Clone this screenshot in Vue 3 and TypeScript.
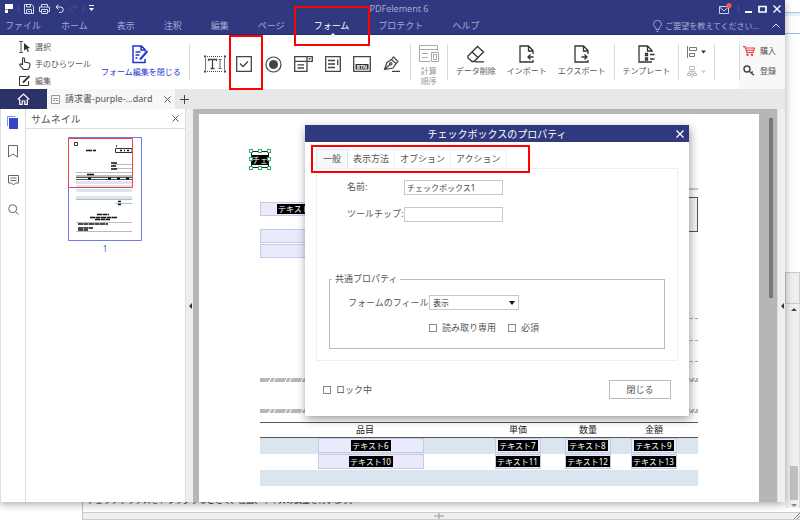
<script setup lang="ts">
import { ref } from 'vue'

interface Row {
  name: string
  price: string
  qty: string
  total: string
}

const menus: string[] = ['ファイル', 'ホーム', '表示', '注釈', '編集', 'ページ', 'フォーム', 'プロテクト', 'ヘルプ']
const activeMenu = ref('フォーム')

const tabs: string[] = ['一般', '表示方法', 'オプション', 'アクション']
const activeTab = ref('一般')

const fieldName = ref('チェックボックス1')
const tooltip = ref('')
const visibility = ref('表示')
const readOnly = ref(false)
const required = ref(false)
const locked = ref(false)

const rows: Row[] = [
  { name: 'テキスト6', price: 'テキスト7', qty: 'テキスト8', total: 'テキスト9' },
  { name: 'テキスト10', price: 'テキスト11', qty: 'テキスト12', total: 'テキスト13' },
  { name: '', price: '', qty: '', total: '' },
  { name: '', price: '', qty: '', total: '' },
  { name: '', price: '', qty: '', total: '' },
]
</script>

<template>
  <div class="desktop">
    <div class="back-edge">
      <div class="back-top"></div>
      <div class="back-block"></div>
      <div class="back-scroll">
        <svg width="8" height="5" viewBox="0 0 8 5"><path d="M1 4L4 1l3 3z" fill="#444" /></svg>
        <span class="back-thumb"></span>
        <svg width="8" height="5" viewBox="0 0 8 5"><path d="M1 1l3 3 3-3z" fill="#888" /></svg>
      </div>
    </div>
    <div class="back-window">
      <p>チェックボックスをドラッグすることで、位置、サイズの調整を行います。</p>
      <div class="back-status">
        <svg class="cross" width="10" height="6" viewBox="0 0 10 6"><path d="M0 3h10M5 0v6" stroke="#999" /></svg>
        <svg class="grip" width="6" height="6" viewBox="0 0 6 6"><path d="M0 6L6 0M3 6l3-3" stroke="#888" /></svg>
      </div>
    </div>

    <div class="window">
      <header class="head">
        <div class="titlebar">
          <div class="quick">
            <svg width="8" height="9" viewBox="0 0 8 9"><path d="M0 0h8v5H3v4H0z" fill="#fff" /><path d="M0 5.500h3" stroke="#303980" stroke-width=".6" /></svg>
            <i class="vbar"></i>
            <button aria-label="保存"><svg width="10" height="10" viewBox="0 0 10 10" fill="none" stroke="#d5d8ee"><path d="M.5.5h7l2 2v7h-9zM2.500 9.500v-4h5v4M2.500.5v2.500h4V.5M4 7.500h2" /></svg></button>
            <button aria-label="印刷"><svg width="11" height="10" viewBox="0 0 11 10" fill="none" stroke="#d5d8ee"><path d="M2.500 3V.5h6V3M2.500 7.500h-2V3h10v4.500h-2M2.500 5.500h6v4h-6zM4 7.500h3" /></svg></button>
            <button aria-label="元に戻す"><svg width="9" height="9" viewBox="0 0 9 9" fill="none" stroke="#e5e7f5"><path d="M3.500.5L1 3l2.500 2.500M1 3h4.500a2.500 2.500 0 010 5.500H4" /></svg></button>
            <button aria-label="やり直し"><svg width="9" height="9" viewBox="0 0 9 9" fill="none" stroke="#454e92"><path d="M5.500.5L8 3 5.500 5.500M8 3H3.500a2.500 2.500 0 000 5.500H5" /></svg></button>
            <i class="vbar"></i>
            <button aria-label="カスタマイズ"><svg width="5" height="7" viewBox="0 0 5 7" fill="#fff"><path d="M0 0h5v1H0zM0 3h5L2.500 6z" /></svg></button>
          </div>
          <span class="app-name">PDFelement 6</span>
          <div class="win-buttons">
            <button aria-label="メッセージ"><svg width="14" height="13" viewBox="0 0 14 13" fill="none" stroke="#cfd2ea"><path d="M1.500 4.500h9v7h-9zM1.500 5l4.500 4 4.500-4" /><circle cx="11" cy="3.500" r="2.500" fill="#fb5a3c" stroke="none" /></svg></button>
            <i class="vbar"></i>
            <button aria-label="最小化"><svg width="7" height="8" viewBox="0 0 7 8"><path d="M0 7h7" stroke="#fff" stroke-width="2" /></svg></button>
            <button aria-label="最大化"><svg width="9" height="8" viewBox="0 0 9 8"><path d="M1 1.500h7v5.500H1z" fill="none" stroke="#fff" stroke-width="1.700" /></svg></button>
            <button aria-label="終了"><svg width="8" height="8" viewBox="0 0 8 8"><path d="M.5.5l7 7M7.500.5l-7 7" stroke="#fff" stroke-width="1.400" /></svg></button>
          </div>
        </div>
        <nav class="menubar">
          <button v-for="m in menus" :key="m" class="menu" :class="{ active: m === activeMenu }" @click="activeMenu = m">{{ m }}</button>
          <div class="wish">
            <svg width="9" height="12" viewBox="0 0 9 12" fill="none" stroke="#9fa4c9"><path d="M3 9.500V8C1 6.500.5 5.500.5 4.300a4 4 0 018 0C8.500 5.500 8 6.500 6 8v1.500zM3.500 11.500h2" /></svg>
            <span>ご要望を教えてください...</span>
            <button aria-label="リボンを折りたたむ"><svg width="8" height="5" viewBox="0 0 8 5" fill="none" stroke="#dfe1f2"><path d="M.5 4.500L4 1l3.500 3.500" /></svg></button>
          </div>
        </nav>
      </header>

      <div class="ribbon">
        <div class="modes">
          <button><svg width="12" height="12" viewBox="0 0 12 12"><path d="M0 .5h4M2 .5v11M0 11.500h4" stroke="#555" fill="none" /><path d="M5 2l6 5-2.500.4L10 10.500l-1.200.6-1.500-3L5 9.500z" fill="#333" /></svg>選択</button>
          <button><svg width="12" height="13" viewBox="0 0 12 13" fill="none" stroke="#333" stroke-width="1.100"><path d="M3.500 7.500V1.800c0-1.500 2-1.500 2 0V5l4 .8c1.500.4 1.700 1 1.500 2.200l-.6 2.500-1.400 2H4.500L1 8.500C.3 7.400 1.400 6.500 2.200 7l1.300 1" /></svg>手のひらツール</button>
          <button><svg width="12" height="11" viewBox="0 0 12 11" fill="none" stroke="#333"><path d="M7.500 1.500h-7v9h9V6" /><path d="M4 7.500L10.500 1" stroke-width="1.800" /></svg>編集</button>
        </div>
        <button class="big close-edit">
          <svg width="17" height="19" viewBox="0 0 17 19" fill="none" stroke="#1d35d4" stroke-width="1.500"><path d="M13 6.500V4.500L9.500 1H1v16.500h12V14M9 1v4h4M3.500 7h5M3.500 10h4M3.500 13h2" /><path d="M15.500 6L8 14.500" stroke-width="2" /></svg>
          <span>フォーム編集を閉じる</span>
        </button>
        <i class="sep"></i>
        <div class="tools">
          <button aria-label="テキストフィールド"><svg width="22" height="18" viewBox="0 0 22 18" fill="none" stroke="#444"><path d="M1.500 3v12M20.500 3v12" stroke="#777" /><path d="M3 1.500h16M3 16.500h16" stroke-dasharray="1 1" /><path d="M0 .5h2v2H0zM20 .5h2v2h-2zM0 15.500h2v2H0zM20 15.500h2v2h-2z" fill="#444" stroke="none" /><path d="M4.500 6V4.500h8V6M8.500 4.500v9M6.500 13.500h4" stroke-width="1.300" /><path d="M14.500 4.500h3M16 4.500v9M14.500 13.500h3" stroke="#666" /></svg></button>
          <button aria-label="チェックボックス"><svg width="16" height="16" viewBox="0 0 16 16" fill="none" stroke="#444" stroke-width="1.300"><path d="M.7.7h14.600v14.600H.7zM4 7.500L7 10.500l5-5" /></svg></button>
          <button aria-label="ラジオボタン"><svg width="17" height="17" viewBox="0 0 17 17"><circle cx="8.500" cy="8.500" r="7.500" fill="none" stroke="#444" stroke-width="1.200" /><circle cx="8.500" cy="8.500" r="4.500" fill="#444" /></svg></button>
          <button aria-label="コンボボックス"><svg width="19" height="16" viewBox="0 0 19 16" fill="none" stroke="#444" stroke-width="1.300"><path d="M13 5.300v10H.7V.7h17.600v4.600H.7M13 .7v4.600M3.500 8.800h6.500M3.500 12h6.500" /><path d="M14 2.300h3.200L15.600 4z" fill="#444" stroke="none" /></svg></button>
          <button aria-label="リストボックス"><svg width="16" height="16" viewBox="0 0 16 16" fill="none" stroke="#444" stroke-width="1.300"><path d="M.7.7h14.600v14.600H.7zM3 4.500h7M3 8h7M3 11.500h7M12.700 3.500V9" /></svg></button>
          <button aria-label="ボタン"><svg width="18" height="16" viewBox="0 0 18 16" fill="none" stroke="#444" stroke-width="1.300"><path d="M.7.7h16.600v14.600H.7z" /><path d="M2.500 8h13v5.500h-13z" fill="#333" stroke="none" /><text x="9" y="12.800" text-anchor="middle" class="btn-glyph">BTN</text></svg></button>
          <button aria-label="署名"><svg width="18" height="16" viewBox="0 0 18 16" fill="none" stroke="#444" stroke-width="1.200"><path d="M1.500 13.500L4 6.500 8.500 3.500l4.500 4-3 4.500zM8.500 3.500L10.500 1 15 5.500l-2 2M1.500 13.500L7 8.500M9 15.400h8" /><circle cx="7.800" cy="7.800" r="1.200" /></svg></button>
        </div>
        <i class="sep"></i>
        <button class="big calc" disabled>
          <svg width="20" height="18" viewBox="0 0 20 18" fill="none" stroke="#aaa"><path d="M11 16.500H.5V.5h18V6M.5 4.500h18M3 8.500h6M3 12.500h6M12.500 7.500h7v9h-7zM14.500 9.500h3v5h-3z" /></svg>
          <span>計算<br />順序</span>
        </button>
        <i class="sep"></i>
        <div class="actions">
          <button class="big"><svg width="18" height="18" viewBox="0 0 18 18" fill="none" stroke="#333" stroke-width="1.300"><path d="M1 11L10.500 1.500l6 5.500L7 16.500H5L1 13zM5 7l6 5.500M8 16.800h9" /></svg><span>データ削除</span></button>
          <button class="big"><svg width="15" height="18" viewBox="0 0 15 18" fill="none" stroke="#333" stroke-width="1.300"><path d="M14 9V5.500L9.500 1H1v16h13v-2M9.500 1v5H14M14.500 12H9M11.500 9.500L9 12l2.500 2.500" /></svg><span>インポート</span></button>
          <button class="big"><svg width="15" height="18" viewBox="0 0 15 18" fill="none" stroke="#333" stroke-width="1.300"><path d="M14 9V5.500L9.500 1H1v16h13v-2M9.500 1v5H14M7.500 12H13M10.500 9.500L13 12l-2.500 2.500" /></svg><span>エクスポート</span></button>
        </div>
        <i class="sep"></i>
        <button class="big template"><svg width="17" height="18" viewBox="0 0 17 18" fill="none" stroke="#333" stroke-width="1.300"><path d="M14 7V5.500L9.500 1H1v16h13M9.500 1v5H14M7.500 8.500h2v2h-2zM7.500 13h2v2h-2zM12 9.500h4.500M12 14h4.500" /></svg><span>テンプレート</span></button>
        <i class="sep"></i>
        <div class="align">
          <button aria-label="整列"><svg width="20" height="12" viewBox="0 0 20 12" fill="none" stroke="#777"><path d="M.5 0v12M2.500 1.500h7v3h-7zM2.500 7.500h5v3h-5z" /><path d="M14 4.500h5l-2.500 3z" fill="#333" stroke="none" /></svg></button>
          <button aria-label="配置" disabled><svg width="20" height="12" viewBox="0 0 20 12" fill="none" stroke="#bbb"><path d="M2.500.5h5v3h-5zM.5 7.500h3v2h-3zM6.500 7.500h3v2h-3zM5 3.500V12M2 7V5.500h6V7" /><path d="M14 4.500h5l-2.500 3z" fill="#ccc" stroke="none" /></svg></button>
        </div>
        <i class="sep last"></i>
        <div class="account">
          <button><svg width="12" height="10" viewBox="0 0 12 10" fill="none" stroke="#ee3b3b" stroke-width="1.100"><path d="M0 .6h2L4 6.500h6l1.500-4.500h-9M3.500 4.200h7" /><circle cx="4.500" cy="8.700" r=".7" /><circle cx="9" cy="8.700" r=".7" /></svg>購入</button>
          <button><svg width="12" height="11" viewBox="0 0 12 11" fill="none" stroke="#444" stroke-width="1.400"><circle cx="4" cy="4" r="3" /><path d="M6 6l5 4.300M8.500 8l1.200-1.500" /></svg>登録</button>
        </div>
      </div>

      <div class="doc-tabs">
        <button class="home" aria-label="ホーム画面"><svg width="13" height="12" viewBox="0 0 13 12" fill="none" stroke="#fff" stroke-width="1.200"><path d="M.7 6.500L6.500 1l5.800 5.500M2.700 6v5.300h2.500V8h2.600v3.300h2.500V6" /></svg></button>
        <div class="doc-tab">
          <svg width="9" height="9" viewBox="0 0 9 9" fill="none" stroke="#999"><path d="M.5.5h8v8h-8zM2 3.500h5M2 5.500h2M5 5.500h2" /></svg>
          <span>請求書-purple-...dard</span>
          <button aria-label="タブを閉じる"><svg width="7" height="7" viewBox="0 0 7 7"><path d="M.5.5l6 6M6.500.5l-6 6" stroke="#555" /></svg></button>
        </div>
        <button class="add" aria-label="新しいタブ"><svg width="9" height="9" viewBox="0 0 9 9"><path d="M0 4.500h9M4.500 0v9" stroke="#444" /></svg></button>
      </div>

      <div class="body">
        <nav class="rail">
          <button aria-label="サムネイル表示"><svg width="12" height="13" viewBox="0 0 12 13"><path d="M.5 10V.5h8" fill="none" stroke="#8390e6" /><path d="M2 2h9v11H2z" fill="#3346c8" /></svg></button>
          <button aria-label="ブックマーク"><svg width="10" height="13" viewBox="0 0 10 13" fill="none" stroke="#666"><path d="M.5.500h9v11.500L5 9 .5 12z" /></svg></button>
          <button aria-label="コメント"><svg width="11" height="11" viewBox="0 0 11 11" fill="none" stroke="#666"><path d="M.5.5h10v7.500H7.500L5.500 10l-2-2h-3zM2.500 3h6M2.500 5.500h6" /></svg></button>
          <button aria-label="検索"><svg width="11" height="11" viewBox="0 0 11 11" fill="none" stroke="#666"><circle cx="4.700" cy="4.700" r="4" /><path d="M7.500 7.500l3 3" /></svg></button>
        </nav>
        <aside class="thumbs">
          <div class="thumbs-head">
            <span>サムネイル</span>
            <button aria-label="パネルを閉じる"><svg width="7" height="7" viewBox="0 0 7 7"><path d="M.5.5l6 6M6.500.5l-6 6" stroke="#555" /></svg></button>
          </div>
          <figure>
            <svg width="74" height="104" viewBox="0 0 74 104" fill="none">
              <path d="M8 35.500h56M8 85.500h56M8 94.500h56M47 66.500h17M45 27.500h19M45 31.500h19" stroke="#bbb" />
              <path d="M8 44h56v3H8zM8 48h56v2H8zM8 52h56v3H8zM8 59h56v3H8z" fill="#dbe5ef" />
              <path d="M8 38h56v2H8z" fill="#bbb" />
              <path d="M8 40.500h56M8 42.500h56" stroke="#555" />
              <path d="M20 41.500h3M40 41.500h3M49 41.500h3M58 41.500h3" stroke="#000" stroke-width="2" />
              <path d="M6.500 5.500h3v3h-3z" stroke="#333" />
              <path d="M18 13.500h6M25 13.500h3" stroke="#111" stroke-width="1.500" />
              <path d="M47.500 11.500h16.500v4H47.500z" stroke="#333" />
              <path d="M52 13.500h2M56 13.500h1M59 13.500h2M48 9h1" stroke="#111" stroke-width="1.500" />
              <path d="M43 26h6M43 29h5M43 32h6M19 37.500h7M50 64.500h3M50 67.500h3" stroke="#111" stroke-width="1.500" />
              <path d="M29 77.500h12M22 80.500h27M27 82.500h15M10 87h30M10 91h15M10 93h10" stroke="#111" stroke-width="1.500" stroke-dasharray="5 .5" />
              <path d="M8 62.500h56" stroke="#bbb" />
              <path d="M.5.5h73v103H.5z" stroke="#6f7be8" />
              <path d="M.5 1.500h64v49H.5z" stroke="#f2404a" />
            </svg>
            <figcaption>1</figcaption>
          </figure>
        </aside>
        <div class="splitter"><svg width="4" height="6" viewBox="0 0 4 6"><path d="M4 0v6L1 3z" fill="#333" /></svg></div>
        <main class="viewer">
          <div class="page">
            <div class="canvas">
              <div class="picked">
                <span>チェ</span>
                <i v-for="n in 8" :key="n" class="handle" :class="'h' + n"></i>
              </div>
              <div class="field f1"><span class="chip">テキスト1</span></div>
              <div class="field f2"></div>
              <div class="field f3"></div>
              <div class="rule-top"></div>
              <div class="total-box"></div>
              <div class="dots d1"></div>
              <div class="dots d2"></div>
              <div class="dots d3"></div>
              <div class="hatch t1"></div>
              <div class="hatch t2"></div>
            </div>
            <table class="items">
              <thead>
                <tr><th class="c-name">品目</th><th class="c-price">単価</th><th class="c-qty">数量</th><th class="c-total">金額</th></tr>
              </thead>
              <tbody>
                <tr v-for="(r, i) in rows" :key="i">
                  <td><div v-if="r.name" class="slot wide"><span class="chip">{{ r.name }}</span></div></td>
                  <td><div v-if="r.price" class="slot"><span class="chip">{{ r.price }}</span></div></td>
                  <td><div v-if="r.qty" class="slot"><span class="chip">{{ r.qty }}</span></div></td>
                  <td class="c-total"><div v-if="r.total" class="slot"><span class="chip">{{ r.total }}</span></div></td>
                </tr>
              </tbody>
            </table>
          </div>
          <div class="scroll"><i></i></div>
        </main>
        <div class="splitter"><svg width="4" height="6" viewBox="0 0 4 6"><path d="M4 0v6L1 3z" fill="#333" /></svg></div>
      </div>

      <section class="dialog" role="dialog" aria-labelledby="dlg-title">
        <div class="dialog-head">
          <h2 id="dlg-title">チェックボックスのプロパティ</h2>
          <button aria-label="ダイアログを閉じる"><svg width="8" height="8" viewBox="0 0 8 8"><path d="M.5.5l7 7M7.500.5l-7 7" stroke="#fff" stroke-width="1.300" /></svg></button>
        </div>
        <div class="dialog-body">
          <div class="tabs" role="tablist">
            <button v-for="t in tabs" :key="t" role="tab" :aria-selected="t === activeTab" :class="{ on: t === activeTab }" @click="activeTab = t">{{ t }}</button>
          </div>
          <div class="panel">
            <div class="line">
              <label for="f-name">名前:</label>
              <input id="f-name" v-model="fieldName" type="text" />
            </div>
            <div class="line">
              <label for="f-tip">ツールチップ:</label>
              <input id="f-tip" v-model="tooltip" type="text" />
            </div>
            <fieldset>
              <legend>共通プロパティ</legend>
              <div class="pick">
                <label for="f-vis">フォームのフィールド</label>
                <div class="select">
                  <select id="f-vis" v-model="visibility">
                    <option>表示</option>
                    <option>非表示</option>
                  </select>
                  <svg width="6" height="4" viewBox="0 0 6 4"><path d="M0 0h6L3 4z" fill="#111" /></svg>
                </div>
              </div>
              <div class="checks">
                <label><input v-model="readOnly" type="checkbox" />読み取り専用</label>
                <label><input v-model="required" type="checkbox" />必須</label>
              </div>
            </fieldset>
          </div>
          <div class="foot">
            <label><input v-model="locked" type="checkbox" />ロック中</label>
            <button>閉じる</button>
          </div>
        </div>
      </section>

      <div class="mark mark-menu"></div>
      <div class="mark mark-tool"></div>
      <div class="mark mark-tabs"></div>
    </div>
  </div>
</template>

<style>
body {
  margin: 0;
  background: #fff;
}
</style>

<style scoped>
.desktop {
  position: relative;
  min-height: 100vh;
  overflow: hidden;
  font-family: 'Noto Sans', 'Noto Sans CJK JP', sans-serif;
  font-size: 9px;
  line-height: 12px;
  color: #555;
  white-space: nowrap;
}
.desktop * {
  box-sizing: border-box;
}
button {
  display: flex;
  align-items: center;
  padding: 0;
  border: 0;
  background: none;
  font: inherit;
  color: inherit;
}
svg {
  display: block;
  flex: none;
}

/* window behind */
.back-edge {
  position: absolute;
  top: 0;
  right: 0;
  bottom: 12px;
  width: 15px;
  display: flex;
  flex-direction: column;
}
.back-top {
  height: 34px;
  border-bottom: 1px solid #9db9e6;
  background: linear-gradient(#fff 12px, #a8c4ea 12px, #a8c4ea 13px, #e6f0fc 13px, #e6f0fc 16px, #fff 16px);
}
.back-block {
  margin-top: 238px;
  height: 32px;
  border: 1px solid #ccc;
  background: #efefed;
}
.back-scroll {
  flex: 1;
  display: flex;
  flex-direction: column;
  align-items: center;
  padding: 3px 1px 0 4px;
  background: #f0f0f0;
  border-right: 1px solid #ddd;
}
.back-thumb {
  width: 8px;
  height: 34px;
  margin-top: auto;
  margin-bottom: 3px;
  background: #c0c0c0;
}
.back-window {
  position: absolute;
  left: 82px;
  right: 0;
  bottom: 0;
  border-left: 1px solid #c4c4c4;
}
.back-window p {
  margin: 0;
  padding: 0 4px 6px;
  line-height: 12px;
  font-size: 8px;
  color: #222;
}
.back-status {
  display: flex;
  justify-content: center;
  align-items: center;
  height: 8px;
  border: solid #ccc;
  border-width: 1px 0;
  background: #efefef;
}
.cross {
  margin-left: auto;
}
.grip {
  margin-left: auto;
}

/* main window */
.window {
  position: absolute;
  top: 0;
  left: 0;
  right: 15px;
  bottom: 18px;
  display: flex;
  flex-direction: column;
  background: #fff;
  box-shadow: 0 2px 8px rgba(0, 0, 0, 0.35);
}
.head {
  height: 35px;
  background: #303980;
  border-bottom: 1px solid #252d6c;
  color: #a5aad0;
}
.titlebar {
  display: grid;
  grid-template-columns: 1fr auto 1fr;
  align-items: center;
  height: 17px;
}
.quick {
  display: flex;
  align-items: center;
  gap: 5px;
  padding-left: 5px;
}
.vbar {
  width: 1px;
  height: 9px;
  background: #424b90;
}
.app-name {
  padding-left: 13px;
}
.win-buttons {
  display: flex;
  justify-content: flex-end;
  align-items: center;
  gap: 6px;
  padding-right: 4px;
}
.menubar {
  display: flex;
  align-items: center;
  gap: 29px;
  height: 17px;
  padding-left: 5px;
}
.menu:first-child {
  margin-right: -9px;
}
.menu.active {
  position: relative;
  color: #fff;
}
.menu.active::after {
  content: '';
  position: absolute;
  left: 50%;
  bottom: -3px;
  border: 2px solid transparent;
  border-bottom-color: #fff;
}
.wish {
  display: flex;
  align-items: center;
  gap: 3px;
  margin-left: auto;
  padding-right: 5px;
  font-size: 8px;
}
.wish button {
  margin-left: 10px;
}

.ribbon {
  display: flex;
  align-items: center;
  height: 54px;
  font-size: 8px;
  line-height: 10px;
}
.modes {
  display: flex;
  flex-direction: column;
  gap: 5px;
  flex: 0 0 101px;
  padding: 3px 0 0 19px;
}
.modes button {
  gap: 4px;
  height: 12px;
}
.big {
  display: flex;
  flex-direction: column;
  align-items: center;
  justify-content: flex-start;
  gap: 3px;
  height: 34px;
}
.close-edit {
  color: #1d35d4;
  margin-right: 8px;
}
.sep {
  width: 1px;
  height: 36px;
  background: #d9d9d9;
}
.tools {
  display: flex;
  justify-content: space-between;
  align-items: center;
  flex: 0 0 199px;
  margin: 4px 7px 0 14px;
}
.tools button {
  justify-content: center;
  width: 22px;
}
.btn-glyph {
  font-size: 5px;
  font-weight: 700;
  fill: #fff;
  stroke: none;
}
.calc {
  margin: 6px 8px 0;
  color: #999;
  height: 40px;
}
.actions {
  display: flex;
  gap: 11px;
  margin: 0 8px;
}
.template {
  margin: 0 8px;
}
.align {
  display: flex;
  flex-direction: column;
  gap: 8px;
  margin: 0 7px 0 8px;
}
.sep.last {
  margin-right: auto;
}
.account {
  display: flex;
  flex-direction: column;
  justify-content: center;
  gap: 9px;
  height: 54px;
  padding: 0 9px 2px 4px;
  background: linear-gradient(#d9d9d9, #d9d9d9) 0 9px / 1px 36px no-repeat #f8f8f8;
}
.account button {
  gap: 5px;
}

.doc-tabs {
  display: flex;
  height: 20px;
  background: #e8e8e8;
}
.home {
  width: 47px;
  justify-content: center;
  background: #2b3268;
}
.doc-tab {
  display: flex;
  align-items: center;
  gap: 5px;
  width: 128px;
  padding: 0 4px;
  background: #f7f7f7;
}
.doc-tab button {
  margin-left: auto;
}
.add {
  padding: 0 5px;
}

.body {
  display: flex;
  flex: 1;
  min-height: 0;
}
.rail {
  display: flex;
  flex-direction: column;
  gap: 15px;
  width: 26px;
  padding-top: 6px;
  border: solid #ddd;
  border-width: 0 1px;
}
.rail button {
  justify-content: center;
  height: 14px;
}
.thumbs {
  width: 159px;
}
.thumbs-head {
  display: flex;
  align-items: center;
  justify-content: space-between;
  height: 20px;
  padding: 0 6px 0 5px;
  border-bottom: 1px solid #ddd;
  font-size: 10px;
}
figure {
  display: flex;
  flex-direction: column;
  align-items: center;
  margin: 8px 1px 0 0;
}
figcaption {
  margin-top: 2px;
  color: #4f5ee8;
}
.splitter {
  display: flex;
  align-items: center;
  justify-content: center;
  width: 8px;
  background: #efefef;
  border-left: 1px solid #ddd;
}
.viewer {
  display: flex;
  flex: 1;
  min-width: 0;
  padding: 5px 0 0 6px;
  background: #b6b6b6;
  overflow: hidden;
}
.page {
  flex: 1;
  padding: 0 61px;
  background: #fff;
  overflow: hidden;
}
.scroll {
  width: 18px;
  padding: 4px 0 0 10px;
}
.scroll i {
  display: block;
  width: 4px;
  height: 180px;
  background: #777;
}
.canvas {
  position: relative;
  height: 308px;
}
.picked {
  position: absolute;
  left: -9px;
  top: 37px;
  width: 18px;
  height: 17px;
  padding: 3px 0;
  border: 1px solid #222;
  background: #fff;
}
.picked > span {
  display: block;
  height: 10px;
  line-height: 10px;
  font-size: 8px;
  color: #fff;
  background: #000;
}
.handle {
  position: absolute;
  width: 4px;
  height: 4px;
  border: 1px solid #2fae6d;
  background: #fff;
}
.h1, .h4, .h6 { left: -3px; }
.h2, .h7 { left: 6px; }
.h3, .h5, .h8 { right: -3px; }
.h1, .h2, .h3 { top: -3px; }
.h4, .h5 { top: 5px; }
.h6, .h7, .h8 { bottom: -3px; }
.field {
  position: absolute;
  left: 0;
  width: 72px;
  height: 14px;
  padding: 1px 0 0 16px;
  border: 1px solid #c5cce2;
  background: #e9ebfd;
}
.f1 { top: 88px; }
.f2 { top: 115px; }
.f3 { top: 130px; }
.chip {
  display: inline-block;
  height: 10px;
  padding: 0 2px 0 1px;
  line-height: 10px;
  font-size: 8px;
  color: #fff;
  background: #000;
  vertical-align: top;
}
.rule-top {
  position: absolute;
  top: 74px;
  right: 0;
  width: 120px;
  height: 2px;
  background: #c8c8c8;
}
.total-box {
  position: absolute;
  top: 83px;
  right: 0;
  width: 120px;
  height: 35px;
  border: 1px solid #555;
  background: #f5f5f5;
}
.dots {
  position: absolute;
  right: 0;
  width: 120px;
  border-top: 1px dashed #aaa;
}
.d1 { top: 204px; }
.d2 { top: 226px; }
.d3 { top: 247px; }
.hatch {
  position: absolute;
  left: 0;
  right: 0;
  height: 4px;
  background: repeating-linear-gradient(120deg, #b8b8b8 0 9px, #fff 9px 10px, #b8b8b8 10px 13px, #fff 13px 14px);
}
.t1 { top: 264px; }
.t2 { top: 295px; }
.items {
  width: 100%;
  table-layout: fixed;
  border-collapse: collapse;
  line-height: 12px;
}
.items th {
  height: 15px;
  padding: 0;
  border: solid #555;
  border-width: 1px 0;
  font-weight: 400;
  color: #222;
}
.items td {
  height: 16px;
  padding: 0;
}
.items tbody tr:nth-child(odd) {
  background: #dbe5ef;
}
.items th.c-name { padding-right: 12px; }
.c-price { width: 72px; }
.c-qty { width: 68px; }
.c-total { width: 76px; }
.items .c-total { padding-right: 12px; }
.slot {
  width: 46px;
  height: 15px;
  margin: 0 auto;
  padding-top: 1px;
  border: 1px solid #c5cce2;
  background: #e9ebfd;
  text-align: center;
}
.slot.wide {
  width: 106px;
}
.slot .chip {
  height: 11px;
  line-height: 11px;
}

/* properties dialog */
.dialog {
  position: absolute;
  top: 125px;
  left: 305px;
  right: 96px;
  background: #fff;
  box-shadow: 1px 3px 9px rgba(0, 0, 0, 0.4);
}
.dialog-head {
  display: flex;
  align-items: center;
  height: 17px;
  padding: 0 5px 0 13px;
  background: #303980;
  color: #fff;
}
.dialog-head h2 {
  flex: 1;
  margin: 0;
  font-size: 10px;
  font-weight: 400;
  text-align: center;
}
.dialog-body {
  padding: 7px 11px 17px;
}
.tabs {
  display: flex;
  height: 19px;
}
.tabs button {
  padding: 0 5px;
  border: solid #eee;
  border-width: 1px 1px 0 0;
}
.tabs button.on {
  padding: 0 6px;
  border: 1px solid #cfeaf8;
  border-bottom: 0;
  background: #f8f8f8;
}
.panel {
  padding: 11px 12px;
  border: 1px solid #eee;
}
.line {
  display: flex;
  align-items: center;
  height: 14px;
  margin-bottom: 13px;
  padding-left: 18px;
}
.line label {
  width: 57px;
}
.line input {
  width: 99px;
  height: 15px;
  padding: 0 2px;
  border: 1px solid #c8c8c8;
  font: inherit;
  font-size: 8px;
  color: #444;
  outline: 0;
}
fieldset {
  min-width: 0;
  margin: 52px 0 0;
  padding: 10px 0 14px 18px;
  border: 1px solid #bbb;
}
legend {
  margin-left: -16px;
  padding: 0 3px;
}
.pick {
  display: flex;
  align-items: center;
}
.pick label {
  width: 81px;
}
.select {
  position: relative;
}
.select select {
  display: block;
  appearance: none;
  width: 90px;
  height: 15px;
  padding: 0 3px;
  border: 1px solid #c8c8c8;
  border-radius: 0;
  background: #fff;
  font: inherit;
  font-size: 8px;
  color: #333;
}
.select svg {
  position: absolute;
  right: 4px;
  top: 6px;
  pointer-events: none;
}
.checks {
  display: flex;
  gap: 12px;
  padding: 12px 0 0 81px;
}
.checks label,
.foot label {
  display: flex;
  align-items: center;
  gap: 5px;
}
input[type='checkbox'] {
  appearance: none;
  width: 8px;
  height: 8px;
  margin: 0;
  border: 1px solid #888;
}
.foot {
  display: flex;
  align-items: center;
  justify-content: space-between;
  padding: 19px 7px 0;
}
.foot button {
  justify-content: center;
  width: 62px;
  height: 19px;
  border: 1px solid #bbb;
}

/* red callouts */
.mark {
  position: absolute;
  border: 2px solid #f00;
  pointer-events: none;
}
.mark-menu {
  left: 294px;
  top: 6px;
  width: 76px;
  height: 40px;
}
.mark-tool {
  left: 229px;
  top: 35px;
  width: 34px;
  height: 55px;
}
.mark-tabs {
  left: 311px;
  top: 145px;
  width: 219px;
  height: 28px;
}
</style>
